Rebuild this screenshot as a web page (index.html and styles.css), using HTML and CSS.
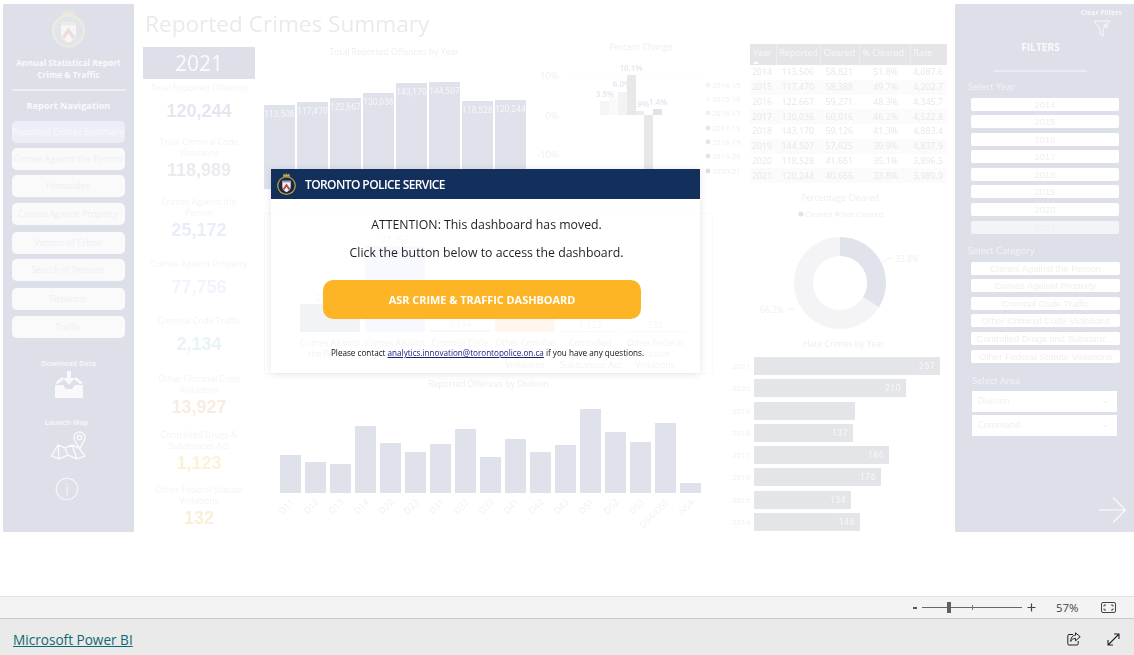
FILE: index.html
```html
<!DOCTYPE html>
<html lang="en">
<head>
<meta charset="utf-8">
<title>Reported Crimes Summary</title>
<link rel="stylesheet" href="styles.css">
</head>
<body>
<svg class="defs" width="0" height="0" aria-hidden="true">
  <symbol id="crest" viewBox="0 0 40 44">
    <path class="crest-crown" d="M13 7 L15 1 L18 4 L20 0 L22 4 L25 1 L27 7 Z"/>
    <circle class="crest-ring" cx="20" cy="24" r="18"/>
    <circle class="crest-inner" cx="20" cy="24" r="15.5"/>
    <path class="crest-shield" d="M12 15 H28 V27 Q28 33 20 37 Q12 33 12 27 Z"/>
    <path class="crest-chev" d="M20 20 L27 30 L24.5 33 L20 26.5 L15.5 33 L13 30 Z"/>
    <path class="crest-top" d="M12 15 H28 V18 H12 Z"/>
  </symbol>
</svg>

<div class="page">
  <div class="canvas">
    <div class="report">
      <aside class="side">
        <svg class="side-crest"><use href="#crest"/></svg>
        <div class="side-title">Annual Statistical Report<br>Crime &amp; Traffic</div>
        <div class="side-rule"></div>
        <div class="side-nav-title">Report Navigation</div>
        <nav class="nav">
          <div class="nav-btn nav-on">Reported Crimes Summary</div>
          <div class="nav-btn">Crimes Against the Person</div>
          <div class="nav-btn">Homicides</div>
          <div class="nav-btn">Crimes Against Property</div>
          <div class="nav-btn">Victims of Crime</div>
          <div class="nav-btn">Search of Persons</div>
          <div class="nav-btn">Firearms</div>
          <div class="nav-btn">Traffic</div>
        </nav>
        <div class="side-cap cap-dl">Download Data</div>
        <svg class="ic-dl" viewBox="0 0 28 27">
          <path d="M12 0H16V7H20L14 14L8 7H12Z"/>
          <path d="M0 14H8L11 18H17L20 14H28V27H0Z"/>
          <path d="M0 12L7 6L9 8L3 13Z M28 12L21 6L19 8L25 13Z"/>
        </svg>
        <div class="side-cap cap-map">Launch Map</div>
        <svg class="ic-map" viewBox="0 0 36 29">
          <path d="M1.5 25 L8 14 L15 17 L22 14 L29 17 L35 25 L27 28 L18 24 L9 28 Z M8 14 L9 28 M15 17 L18 24 M22 14 L27 28"/>
          <path d="M29.5 17.5 C26 12 24 9.5 24 6.5 A5.5 5.5 0 0 1 35 6.5 C35 9.5 33 12 29.5 17.5 Z"/>
          <circle cx="29.5" cy="6.5" r="2.2"/>
        </svg>
        <svg class="ic-info" viewBox="0 0 24 24">
          <circle cx="12" cy="12" r="10.8"/>
          <path d="M12 10V18M12 6.5V8"/>
        </svg>
      </aside>

      <main class="main">
        <h1 class="title">Reported Crimes Summary</h1>
        <div class="body">
          <section class="kpis">
            <div class="year-box">2021</div>
            <div class="kpi-list">
              <div class="kpi"><div class="kpi-label one">Total Reported Offences</div><div class="kpi-val v1">120,244</div></div>
              <div class="kpi"><div class="kpi-label">Total Criminal Code<br>Violations</div><div class="kpi-val v2">118,989</div></div>
              <div class="kpi"><div class="kpi-label">Crimes Against the<br>Person</div><div class="kpi-val v3">25,172</div></div>
              <div class="kpi"><div class="kpi-label one">Crimes Against Property</div><div class="kpi-val v4">77,756</div></div>
              <div class="kpi"><div class="kpi-label one">Criminal Code Traffic</div><div class="kpi-val v5">2,134</div></div>
              <div class="kpi"><div class="kpi-label">Other Criminal Code<br>Violations</div><div class="kpi-val v6">13,927</div></div>
              <div class="kpi"><div class="kpi-label">Controlled Drugs &amp;<br>Substances Act</div><div class="kpi-val v7">1,123</div></div>
              <div class="kpi"><div class="kpi-label">Other Federal Statute<br>Violations</div><div class="kpi-val v8">132</div></div>
            </div>
          </section>

          <section class="charts">
            <div class="top-row">
              <div class="year-chart">
                <div class="chart-title year-title">Total Reported Offences by Year</div>
                <div class="year-bars">
                  <div class="ybar" style="height:84px">113,506</div>
                  <div class="ybar" style="height:87px">117,470</div>
                  <div class="ybar" style="height:91px">122,667</div>
                  <div class="ybar" style="height:96px">130,036</div>
                  <div class="ybar" style="height:106px">143,170</div>
                  <div class="ybar" style="height:107px">144,507</div>
                  <div class="ybar" style="height:88px">118,528</div>
                  <div class="ybar" style="height:89px">120,244</div>
                </div>
              </div>
              <svg class="pct" width="220" height="173" viewBox="0 0 220 173">
                <text class="t-title" x="111" y="10" text-anchor="middle">Percent Change</text>
                <text class="t-axis" x="29" y="39" text-anchor="end">10%</text>
                <text class="t-axis" x="29" y="79" text-anchor="end">0%</text>
                <text class="t-axis" x="29" y="118" text-anchor="end">-10%</text>
                <path class="p-grid" d="M40 35H172"/>
                <rect class="p1" x="70" y="61" width="9" height="14"/>
                <rect class="p2" x="79" y="57" width="9" height="18"/>
                <rect class="p3" x="88" y="52" width="9" height="23"/>
                <rect class="p4" x="97" y="35" width="9" height="40"/>
                <rect class="p5" x="106" y="71" width="8" height="4"/>
                <rect class="p6" x="114" y="75" width="9" height="75"/>
                <rect class="p7" x="123" y="69" width="9" height="6"/>
                <text class="t-bar" x="75" y="57" text-anchor="middle">3.5%</text>
                <text class="t-bar" x="92" y="47" text-anchor="middle">6.0%</text>
                <text class="t-bar" x="101" y="31" text-anchor="middle">10.1%</text>
                <text class="t-bar" x="110" y="67" text-anchor="middle">0.9%</text>
                <text class="t-bar" x="128" y="65" text-anchor="middle">1.4%</text>
                <circle class="d1" cx="178" cy="45" r="2.4"/><text class="t-leg" x="182" y="48">2014-15</text>
                <circle class="d2" cx="178" cy="59" r="2.4"/><text class="t-leg" x="182" y="62">2015-16</text>
                <circle class="d3" cx="178" cy="73" r="2.4"/><text class="t-leg" x="182" y="76">2016-17</text>
                <circle class="d4" cx="178" cy="88" r="2.4"/><text class="t-leg" x="182" y="91">2017-18</text>
                <circle class="d5" cx="178" cy="102" r="2.4"/><text class="t-leg" x="182" y="105">2018-19</text>
                <circle class="d6" cx="178" cy="116" r="2.4"/><text class="t-leg" x="182" y="119">2019-20</text>
                <circle class="d7" cx="178" cy="131" r="2.4"/><text class="t-leg" x="182" y="134">2020-21</text>
              </svg>
            </div>

            <div class="cat-card">
              <div class="chart-title">Total Reported Offences by Category</div>
              <div class="cat-cols">
                <div class="cat-col"><div class="cat-plot"><span>25,172</span><i class="cb1" style="height:28px"></i></div><div class="cat-label">Crimes Against<br>the Person</div></div>
                <div class="cat-col"><div class="cat-plot"><span>77,756</span><i class="cb2" style="height:86px"></i></div><div class="cat-label">Crimes Against<br>Property</div></div>
                <div class="cat-col"><div class="cat-plot"><span>2,134</span><i class="cb3" style="height:2px"></i></div><div class="cat-label">Criminal Code<br>Traffic</div></div>
                <div class="cat-col"><div class="cat-plot"><span>13,927</span><i class="cb4" style="height:15px"></i></div><div class="cat-label">Other Criminal<br>Code<br>Violations</div></div>
                <div class="cat-col"><div class="cat-plot"><span>1,123</span><i class="cb5" style="height:1px"></i></div><div class="cat-label">Controlled<br>Drugs &amp;<br>Substances Act</div></div>
                <div class="cat-col"><div class="cat-plot"><span>132</span><i class="cb6" style="height:1px"></i></div><div class="cat-label">Other Federal<br>Statute<br>Violations</div></div>
              </div>
            </div>

            <div class="div-chart">
              <div class="chart-title">Reported Offences by Division</div>
              <div class="div-bars">
                <div class="dcol"><i style="height:38px"></i><span>D11</span></div>
                <div class="dcol"><i style="height:31px"></i><span>D12</span></div>
                <div class="dcol"><i style="height:29px"></i><span>D13</span></div>
                <div class="dcol"><i style="height:67px"></i><span>D14</span></div>
                <div class="dcol"><i style="height:50px"></i><span>D22</span></div>
                <div class="dcol"><i style="height:41px"></i><span>D23</span></div>
                <div class="dcol"><i style="height:49px"></i><span>D31</span></div>
                <div class="dcol"><i style="height:64px"></i><span>D32</span></div>
                <div class="dcol"><i style="height:36px"></i><span>D33</span></div>
                <div class="dcol"><i style="height:54px"></i><span>D41</span></div>
                <div class="dcol"><i style="height:41px"></i><span>D42</span></div>
                <div class="dcol"><i style="height:48px"></i><span>D43</span></div>
                <div class="dcol"><i style="height:84px"></i><span>D51</span></div>
                <div class="dcol"><i style="height:61px"></i><span>D52</span></div>
                <div class="dcol"><i style="height:51px"></i><span>D53</span></div>
                <div class="dcol"><i style="height:70px"></i><span>D54/D55</span></div>
                <div class="dcol"><i style="height:10px"></i><span>NSA</span></div>
              </div>
            </div>
          </section>

          <section class="right">
            <table class="tbl">
              <thead>
                <tr><th class="c1">Year<b class="sort"></b></th><th class="c2">Reported</th><th class="c3">Cleared</th><th class="c4">% Cleared</th><th class="c5">Rate</th></tr>
              </thead>
              <tbody>
                <tr><td>2014</td><td>113,506</td><td>58,821</td><td>51.8%</td><td>4,087.6</td></tr>
                <tr><td>2015</td><td>117,470</td><td>58,388</td><td>49.7%</td><td>4,202.7</td></tr>
                <tr><td>2016</td><td>122,667</td><td>59,271</td><td>48.3%</td><td>4,345.7</td></tr>
                <tr><td>2017</td><td>130,036</td><td>60,016</td><td>46.2%</td><td>4,522.8</td></tr>
                <tr><td>2018</td><td>143,170</td><td>59,126</td><td>41.3%</td><td>4,883.4</td></tr>
                <tr><td>2019</td><td>144,507</td><td>57,625</td><td>39.9%</td><td>4,837.9</td></tr>
                <tr><td>2020</td><td>118,528</td><td>41,661</td><td>35.1%</td><td>3,896.5</td></tr>
                <tr><td>2021</td><td>120,244</td><td>40,656</td><td>33.8%</td><td>3,989.9</td></tr>
              </tbody>
            </table>
            <svg class="donut" width="197" height="147" viewBox="0 0 197 147">
              <text class="t-title" x="90" y="10" text-anchor="middle">Percentage Cleared</text>
              <circle class="dn1" cx="51" cy="23" r="2.6"/><text class="t-leg" x="55" y="26">Cleared</text>
              <circle class="dn2" cx="87" cy="23" r="2.6"/><text class="t-leg" x="91" y="26">Not Cleared</text>
              <path class="dn2" d="M129.1 116.2 A46 46 0 1 1 90 46 L90 65 A27 27 0 1 0 113 106.2 Z"/>
              <path class="dn1" d="M90 46 A46 46 0 0 1 129.1 116.2 L113 106.2 A27 27 0 0 0 90 65 Z"/>
              <path class="dn-line" d="M131 72 Q136 67 143 67M45 118H38"/>
              <text class="t-pct" x="145" y="71">33.8%</text>
              <text class="t-pct" x="10" y="122">66.2%</text>
            </svg>
            <div class="hate">
              <div class="chart-title hate-title">Hate Crimes by Year</div>
              <div class="hrow"><span>2021</span><i style="width:186px">257</i></div>
              <div class="hrow"><span>2020</span><i style="width:152px">210</i></div>
              <div class="hrow"><span>2019</span><i style="width:101px"></i></div>
              <div class="hrow"><span>2018</span><i style="width:99px">137</i></div>
              <div class="hrow"><span>2017</span><i style="width:135px">186</i></div>
              <div class="hrow"><span>2016</span><i style="width:127px">176</i></div>
              <div class="hrow"><span>2015</span><i style="width:97px">134</i></div>
              <div class="hrow"><span>2014</span><i style="width:106px">146</i></div>
            </div>
          </section>
        </div>
      </main>

      <aside class="filters">
        <div class="clear">Clear Filters</div>
        <svg class="ic-funnel" viewBox="0 0 18 17">
          <path d="M1 1H17L10 9V16L7 14V9Z"/>
          <circle cx="13" cy="6" r="2"/>
        </svg>
        <div class="f-title">FILTERS</div>
        <div class="f-rule"></div>
        <div class="f-label">Select Year</div>
        <div class="slicer">
          <div class="s-btn">2014</div>
          <div class="s-btn">2015</div>
          <div class="s-btn">2016</div>
          <div class="s-btn">2017</div>
          <div class="s-btn">2018</div>
          <div class="s-btn">2019</div>
          <div class="s-btn">2020</div>
          <div class="s-btn s-on">2021</div>
        </div>
        <div class="f-label f-cat">Select Category</div>
        <div class="slicer">
          <div class="s-btn s-wide">Crimes Against the Person</div>
          <div class="s-btn s-wide">Crimes Against Property</div>
          <div class="s-btn s-wide">Criminal Code Traffic</div>
          <div class="s-btn s-wide">Other Criminal Code Violations</div>
          <div class="s-btn s-wide">Controlled Drugs and Substanc...</div>
          <div class="s-btn s-wide">Other Federal Statute Violations</div>
        </div>
        <div class="f-label f-area">Select Area</div>
        <div class="dd">Division<svg viewBox="0 0 8 5"><path d="M0.5 0.5L4 4L7.5 0.5"/></svg></div>
        <div class="dd">Command<svg viewBox="0 0 8 5"><path d="M0.5 0.5L4 4L7.5 0.5"/></svg></div>
        <svg class="ic-next" viewBox="0 0 27 26"><path d="M0 13H26M14 0.5L26.5 13L14 25.5"/></svg>
      </aside>
    </div>

    <div class="modal">
      <header class="modal-head">
        <svg class="head-crest"><use href="#crest"/></svg>
        <span class="head-text">TORONTO POLICE SERVICE</span>
      </header>
      <p class="msg msg-a">ATTENTION: This dashboard has moved.</p>
      <p class="msg msg-b">Click the button below to access the dashboard.</p>
      <a class="cta">ASR CRIME &amp; TRAFFIC DASHBOARD</a>
      <p class="contact">Please contact <a class="mail">analytics.innovation@torontopolice.on.ca</a> if you have any questions.</p>
    </div>
  </div>

  <div class="zoombar">
    <span class="z-minus"></span>
    <div class="z-track"><span class="z-tick"></span><span class="z-thumb"></span></div>
    <svg class="z-plus" viewBox="0 0 9 9"><path d="M4.5 0.5V8.5M0.5 4.5H8.5"/></svg>
    <span class="z-pct">57%</span>
    <svg class="z-fit" viewBox="0 0 15 11">
      <rect x="0.5" y="0.5" width="14" height="10" rx="1.5"/>
      <path d="M3 4.5V3H5M10 3H12V4.5M12 6.5V8H10M5 8H3V6.5"/>
    </svg>
  </div>
  <footer class="foot">
    <a class="brand">Microsoft Power BI</a>
    <svg class="ic-share" viewBox="0 0 14 14">
      <path d="M6 2.5H2Q0.8 2.5 0.8 3.7V11.8Q0.8 13 2 13H10Q11.2 13 11.2 11.8V9"/>
      <path d="M8.5 0.8L13.2 4.8L8.5 8.8V6.5C6 6.5 4.5 7.5 3.7 9.5C3.7 6 5.5 3.3 8.5 3.2Z"/>
    </svg>
    <svg class="ic-expand" viewBox="0 0 13 13">
      <path d="M1 12L12 1M7 1H12V6M1 7V12H6"/>
    </svg>
  </footer>
</div>
</body>
</html>
```

FILE: styles.css
```css
* { box-sizing: border-box; }
html, body { margin: 0; padding: 0; }
body { font-family: "Open Sans", "Noto Sans", sans-serif; background: #fff; overflow: hidden; }
.defs { position: absolute; }
.page { width: 1134px; height: 655px; display: flex; flex-direction: column; overflow: hidden; }
.canvas { position: relative; height: 596px; flex: none; padding-top: 4px; }

/* faded, blurred report behind the notice */
.report {
  display: grid;
  grid-template-columns: 131px 821px 179px;
  grid-template-rows: 528px;
  height: 528px;
  margin: 0 0 0 3px;
  overflow: hidden;
  filter: blur(0.6px);
}

/* left rail */
.side { background: #dde0e8; display: flex; flex-direction: column; align-items: center; color: #fff; min-height: 0; }
.side-crest { width: 37px; height: 42px; margin-top: 4px; flex: none; --ring: #ecebdf; --inner: #e2e4ea; --shield: #f6f6f6; --chev: #ecdcdc; --band: #ecebdf; --crown: #ebe8d6; }
.side-title { font-size: 8.4px; font-weight: 700; line-height: 12px; text-align: center; margin-top: 7px; color: #f9fafc; white-space: nowrap; }
.side-rule { width: 114px; height: 1.5px; background: #eceef3; margin-top: 8px; flex: none; }
.side-nav-title { font-size: 9.2px; font-weight: 700; line-height: 14px; margin-top: 8px; color: #f9fafc; }
.nav { display: flex; flex-direction: column; width: 113px; margin-top: 8px; margin-left: -1px; flex: none; }
.nav-btn { height: 22px; margin-top: 5px; border-radius: 5px; background: #fafafb; color: #efeff1; font-size: 8.9px; line-height: 22px; text-align: center; white-space: nowrap; flex: none; }
.nav-btn:first-child { margin-top: 0; }
.nav-btn:nth-child(4), .nav-btn:nth-child(8) { margin-top: 6px; }
.nav-btn:nth-child(5), .nav-btn:nth-child(7) { margin-top: 7px; }
.nav-on { background: #eceff8; color: #f9fafd; }
.side-cap { font-size: 7.2px; font-weight: 700; line-height: 10px; color: #f4f5f8; }
.cap-dl { margin-top: 20px; }
.ic-dl { width: 28px; height: 27px; margin-top: 3px; fill: #f9f9fb; flex: none; }
.cap-map { margin-top: 19px; margin-left: -4px; }
.ic-map { width: 36px; height: 29px; margin-top: 4px; margin-left: -1px; fill: none; stroke: #f9f9fb; stroke-width: 1.4; flex: none; }
.ic-info { width: 24px; height: 24px; margin-top: 17px; margin-left: -4px; fill: none; stroke: #f6f7f9; stroke-width: 1.1; flex: none; }

/* main column */
.main { padding: 0 0 0 9px; display: flex; flex-direction: column; min-width: 0; }
.title { margin: 0; height: 36px; flex: none; padding: 6px 0 0 2px; font-size: 22.6px; font-weight: 400; line-height: 28px; color: #eaeaea; }
.body { display: flex; gap: 9px; flex: none; }
.chart-title { font-size: 8.6px; line-height: 12px; text-align: center; color: #eeeeee; }

/* KPI column */
.kpis { width: 112px; flex: none; padding-top: 7px; }
.year-box { height: 32px; background: #dde0e8; color: #fafbfd; font-size: 21px; line-height: 32px; text-align: center; }
.kpi-list { display: grid; grid-template-rows: 54px 60px 62px 57px 58px 56px 55px 45px; padding-top: 4px; }
.kpi { text-align: center; }
.kpi-label { font-size: 8.6px; line-height: 11px; color: #f3f3f3; white-space: nowrap; }
.kpi-label.one { margin-bottom: 6px; }
.kpi-val { font-family: "Liberation Sans", Arial, sans-serif; font-weight: 700; font-size: 18px; line-height: 22px; }
.v1 { color: #e4e7f2; } .v2 { color: #eaebee; } .v3 { color: #e9edf9; } .v4 { color: #f1f4fd; }
.v5 { color: #e8f3f5; } .v6 { color: #f9ece3; } .v7 { color: #fbf3d8; } .v8 { color: #f9efda; }

/* charts column */
.charts { width: 486px; flex: none; }
.top-row { display: flex; height: 173px; }
.year-chart { width: 266px; flex: none; padding-top: 6px; }
.year-title { padding-right: 6px; }
.year-bars { height: 131px; display: flex; gap: 2px; align-items: flex-end; }
.ybar { width: 31px; flex: none; background: #dfe2eb; color: #f6f7fa; font-family: Roboto, sans-serif; font-size: 8.3px; letter-spacing: .1px; line-height: 15px; padding-top: 2px; text-align: center; white-space: nowrap; }
.pct text { font-family: "Open Sans", sans-serif; }
.t-title { font-size: 8.6px; fill: #eeeeee; }
.t-axis { font-size: 9.6px; fill: #efefef; }
.t-bar { font-size: 8px; font-weight: 700; fill: #e8eaf2; }
.t-leg { font-size: 7.6px; fill: #eeeeee; }
.t-pct { font-size: 8.6px; fill: #eeeeee; }
.p-grid { stroke: #fbfbfb; }
.p1 { fill: #f5f5f5; } .p2 { fill: #fafafa; } .p3 { fill: #f3f3f3; } .p4 { fill: #e8e8e8; }
.p5 { fill: #ebecf0; } .p6 { fill: #e7e7e7; } .p7 { fill: #dfe2eb; }
.d1 { fill: #f3f3f3; } .d2 { fill: #fafafa; } .d3 { fill: #f0f0f0; } .d4 { fill: #e6e6e6; }
.d5 { fill: #e4e4ee; } .d6 { fill: #e4e4e4; } .d7 { fill: #d9deea; }

.cat-card { width: 449px; height: 161px; border: 1px solid #fafafa; }
.cat-cols { display: flex; gap: 5px; padding-left: 35px; margin-top: -1px; }
.cat-col { width: 60px; flex: none; }
.cat-plot { height: 107px; display: flex; flex-direction: column; justify-content: flex-end; align-items: center; }
.cat-plot span { font-size: 9px; line-height: 12px; color: #e8e8e8; }
.cat-plot i { display: block; width: 100%; }
.cb1 { background: #dde0e8; } .cb2 { background: #e9f0fb; } .cb3 { background: #dff2ec; }
.cb4 { background: #fbe6d4; } .cb5 { background: #fbf0cc; } .cb6 { background: #f6f2d0; }
.cat-label { font-size: 8.7px; line-height: 11px; color: #dedede; text-align: center; margin-top: 6px; white-space: nowrap; }

.div-chart { width: 449px; padding-top: 4px; }
.div-bars { display: flex; padding-left: 14px; height: 103px; align-items: flex-end; position: relative; margin-bottom: 30px; }
.dcol { width: 25px; flex: none; position: relative; display: flex; justify-content: center; }
.dcol i { display: block; width: 21px; background: #dfe2eb; }
.dcol span { position: absolute; top: 100%; right: 14px; margin-top: 4px; font-size: 9px; line-height: 10px; color: #f0f0f0; white-space: nowrap; transform-origin: 100% 0; transform: rotate(-45deg); }

/* right column */
.right { width: 197px; flex: none; padding-top: 4px; margin-left: -9px; }
.tbl { width: 197px; border-collapse: collapse; table-layout: fixed; font-size: 8.8px; }
.tbl th { height: 21px; background: #e5e5e9; color: #f7f7f9; font-weight: 400; font-size: 8.9px; text-align: left; padding: 0 0 4px 3px; line-height: 12px; position: relative; border-right: 1px solid #ededf0; white-space: nowrap; }
.tbl th:last-child { border-right: 0; }
.c1 { width: 26px; } .c2 { width: 44px; } .c3 { width: 39px; } .c4 { width: 51px; } .c5 { width: 37px; }
.sort { position: absolute; left: 3px; bottom: 1px; width: 0; height: 0; border: 3px solid transparent; border-top: 0; border-bottom: 3px solid #fff; }
.tbl td { height: 14.75px; padding: 0 6px 0 0; line-height: 12px; color: #e7e7e7; text-align: right; white-space: nowrap; }
.tbl tbody tr:nth-child(even) { background: #fbfbfb; }
.tbl td:first-child { padding-right: 4px; }
.tbl td:nth-child(4) { padding-right: 12px; }
.tbl td:nth-child(5) { padding-right: 4px; }
.donut { display: block; margin-top: 8px; }
.dn1 { fill: #e0e3ec; }
.dn2 { fill: #f4f4f6; }
.dn-line { fill: none; stroke: #f2f2f2; }
.hate { margin-left: -18px; width: 215px; }
.hate-title { width: 224px; margin-bottom: 7px; }
.hrow { display: flex; gap: 4px; height: 18px; margin-bottom: 4.3px; font-size: 8px; line-height: 18px; color: #f0f0f0; }
.hrow span { width: 18px; flex: none; }
.hrow i { display: block; flex: none; background: #e4e5e8; color: #f8f8fa; font-style: normal; font-size: 8.6px; font-family: Roboto, sans-serif; text-align: right; padding-right: 5px; letter-spacing: .5px; }

/* filter rail */
.filters { background: #dde0e8; display: flex; flex-direction: column; padding: 4px 0 0 13px; color: #fff; min-height: 0; }
.clear { font-size: 6.9px; font-weight: 700; line-height: 10px; text-align: right; padding-right: 12px; color: #f6f7f9; white-space: nowrap; }
.ic-funnel { width: 18px; height: 17px; margin: 2px 0 0 125px; fill: none; stroke: #f9f9fb; stroke-width: 1; flex: none; }
.f-title { font-size: 10.2px; font-weight: 700; line-height: 14px; margin: 3px 0 0; padding-right: 21px; text-align: center; color: #f9fafc; }
.f-rule { width: 93px; height: 1.5px; background: #e8ebf3; margin: 16px 0 0 26px; flex: none; }
.f-label { font-size: 9.3px; line-height: 12px; margin-top: 9px; color: #f2f3f6; }
.f-cat { margin-top: 11px; }
.f-area { margin: 12px 0 4px 4px; }
.slicer { display: flex; flex-direction: column; gap: 4.6px; margin: 5px 0 0 3px; }
.s-btn { width: 148px; height: 13px; background: #fff; border-radius: 2px; font-family: "Liberation Sans", sans-serif; font-size: 9.4px; line-height: 13px; color: #efefef; text-align: center; white-space: nowrap; overflow: hidden; }
.s-wide { width: 149px; }
.s-on { background: #f3f4f8; color: #eeeff2; }
.dd { width: 145px; height: 21px; margin: 0 0 3px 4px; background: #fff; padding-left: 6px; font-size: 8.7px; line-height: 21px; color: #efefef; display: flex; justify-content: space-between; align-items: center; padding-right: 7px; flex: none; }
.dd svg { width: 8px; height: 5px; fill: none; stroke: #f0f0f0; }
.ic-next { width: 27px; height: 26px; margin: auto 8px 9px 0; align-self: flex-end; fill: none; stroke: #fbfbfc; stroke-width: 1.2; flex: none; }

/* notice over the report */
.modal { position: absolute; left: 271px; top: 169px; width: 429px; height: 204px; background: rgba(255,255,255,.62); box-shadow: 0 1px 8px rgba(0,0,0,.1); text-align: center; color: #1f1f1f; }
.modal-head { height: 30px; background: #132f5b; display: flex; align-items: center; padding-left: 5px; }
.head-crest { width: 21px; height: 23px; --ring: #b99a4a; --inner: #1b2a3f; --shield: #f4f4f4; --chev: #c5443f; --band: #8fa0c0; --crown: #c9a94d; }
.head-text { margin-left: 8px; font-size: 12px; font-weight: 600; color: #fff; letter-spacing: -.59px; white-space: nowrap; }
.msg { margin: 0; padding-left: 2px; font-size: 12.3px; line-height: 18px; white-space: nowrap; }
.msg-a { margin-top: 17px; }
.msg-b { margin-top: 10px; }
.cta { display: block; width: 318px; height: 39px; margin: 18px 0 0 52px; border-radius: 10px; background: #fdb526; color: #fff; font-size: 10.9px; font-weight: 700; line-height: 40px; white-space: nowrap; }
.contact { margin: 28px 0 0; padding-left: 4px; font-size: 8.15px; line-height: 12px; color: #111; white-space: nowrap; }
.mail { color: #1b1b7a; text-decoration: underline; }
.crest-crown { fill: var(--crown); }
.crest-ring { fill: var(--ring); }
.crest-inner { fill: var(--inner); }
.crest-shield { fill: var(--shield); }
.crest-chev { fill: var(--chev); }
.crest-top { fill: var(--band); }

/* zoom bar */
.zoombar { height: 23px; flex: none; background: #f3f3f3; border-top: 1px solid #e2e2e2; border-bottom: 1px solid #c9c9c9; display: flex; align-items: center; padding-left: 913px; color: #444; }
.z-minus { width: 4px; height: 2px; background: #555; }
.z-track { width: 100px; height: 1px; background: #666; margin-left: 5px; position: relative; }
.z-tick { position: absolute; left: 50px; top: -2px; width: 1px; height: 5px; background: #777; }
.z-thumb { position: absolute; left: 25px; top: -5px; width: 4px; height: 11px; background: #606060; }
.z-plus { width: 9px; height: 9px; margin-left: 5px; fill: none; stroke: #444; stroke-width: 1.2; }
.z-pct { margin-left: 20px; font-size: 11.4px; width: 25px; white-space: nowrap; }
.z-fit { width: 15px; height: 11px; margin-left: 20px; fill: none; stroke: #444; stroke-width: 1; }

/* footer */
.foot { flex: 1; background: #eaeaea; display: flex; align-items: center; padding: 4px 0 0 13px; }
.brand { font-size: 13.6px; font-weight: 500; color: #0f6a70; text-decoration: underline; white-space: nowrap; }
.ic-share { width: 14px; height: 14px; margin-left: auto; fill: none; stroke: #222; stroke-width: 1; }
.ic-expand { width: 13px; height: 13px; margin: 0 14px 0 26px; fill: none; stroke: #222; stroke-width: 1.1; }
```
